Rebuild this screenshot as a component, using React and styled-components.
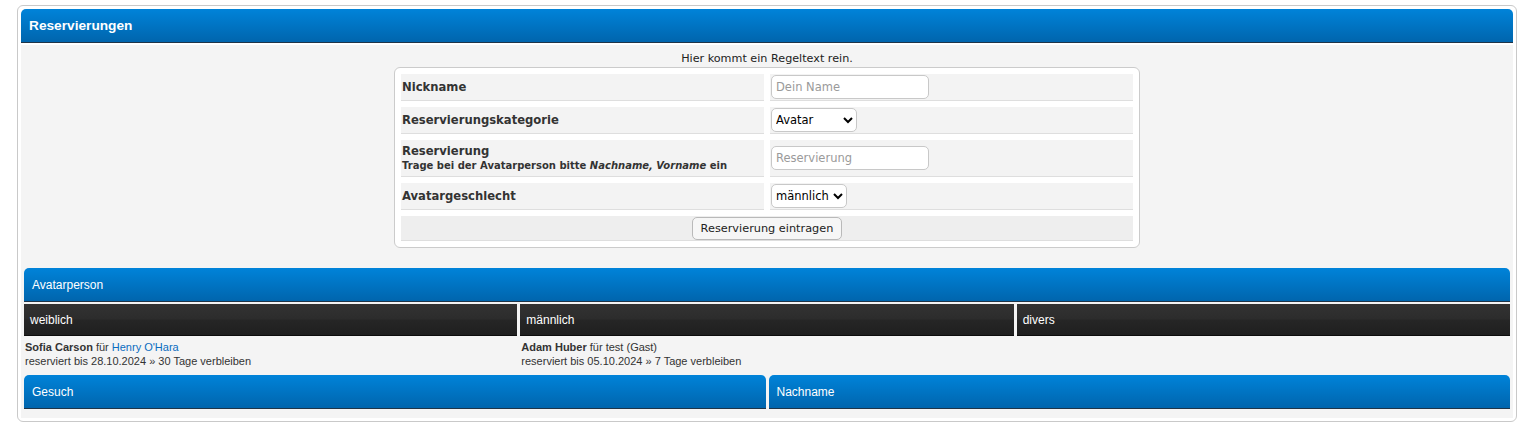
import React from 'react';
import styled, { createGlobalStyle } from 'styled-components';

const GlobalStyle = createGlobalStyle`
  body {
    margin: 0;
    background: #fff;
    font-family: "DejaVu Sans", Verdana, sans-serif;
  }
`

const Page = styled.div`
  padding: 5px 8px 10px 17px;
`

const Frame = styled.div`
  border: 1px solid #c9c9c9;
  border-radius: 6px;
  padding: 3px;
  background: #fff;
`

const BlueBar = styled.div`
  height: 33px;
  display: flex;
  align-items: center;
  padding-left: ${p => p.$pad || 8}px;
  border-bottom: 1px solid #1f3447;
  border-radius: 5px 5px 0 0;
  background: linear-gradient(#0083d9, #0065ad);
  color: #fff;
  font-family: Tahoma, "Liberation Sans", Arial, sans-serif;
  font-size: ${p => p.$size || 12}px;
  font-weight: ${p => (p.$bold ? 700 : 400)};
`

const Body = styled.div`
  margin-top: 2px;
  background: #f4f4f4;
  padding: 7px 0 9px;
`

const Intro = styled.div`
  text-align: center;
  font-size: 11.2px;
  line-height: 14px;
  color: #222;
`

const FormBox = styled.div`
  width: 746px;
  box-sizing: border-box;
  margin: 1px auto 0;
  border: 1px solid #cbcbcb;
  border-radius: 6px;
  background: #fff;
  padding: 6px;
  display: grid;
  grid-template-columns: 1fr 1fr;
  gap: 6px;
`

const Cell = styled.div`
  box-sizing: border-box;
  height: ${p => p.$h}px;
  background: ${p => (p.$wide ? '#eeeeee' : '#f3f3f3')};
  border-bottom: 1px solid #dedede;
  padding: 0 1px;
  display: flex;
  flex-direction: column;
  justify-content: center;
  align-items: ${p => (p.$wide ? 'center' : 'flex-start')};
  grid-column: ${p => (p.$wide ? '1 / 3' : 'auto')};
`

const Label = styled.div`
  font-size: 11.6px;
  font-weight: 700;
  color: #333;
  line-height: 15px;
`

const Hint = styled.div`
  font-size: 10px;
  font-weight: 700;
  color: #333;
  line-height: 14px;
  em { font-style: italic; }
`

const TextInput = styled.input`
  box-sizing: border-box;
  width: 158px;
  height: 24px;
  border: 1px solid #c8c8c8;
  border-radius: 5px;
  padding: 0 4px;
  background: #fff;
  font-family: "DejaVu Sans", Verdana, sans-serif;
  font-size: 11.5px;
  color: #222;
  &::placeholder { color: #9a9a9a; }
`

const Select = styled.select`
  box-sizing: border-box;
  width: ${p => p.$w}px;
  height: 24px;
  border: 1px solid #c8c8c8;
  border-radius: 5px;
  padding: 0;
  background: #fff;
  font-family: "DejaVu Sans", Verdana, sans-serif;
  font-size: 11.5px;
  color: #000;
`

const SubmitButton = styled.button`
  height: 23px;
  padding: 0 8px;
  border: 1px solid #b9b9b9;
  border-radius: 5px;
  background: #f6f6f6;
  font-family: "DejaVu Sans", Verdana, sans-serif;
  font-size: 11.3px;
  color: #222;
`

const Section = styled.div`
  margin: 20px 3px 0;
`

const Columns = styled.div`
  display: grid;
  grid-template-columns: repeat(${p => p.$n}, 1fr);
  column-gap: 3px;
  margin-top: ${p => p.$top || 0}px;
`

const DarkBar = styled.div`
  height: 31px;
  display: flex;
  align-items: center;
  padding-left: 6px;
  border-bottom: 1px solid #0d0d0d;
  background: linear-gradient(#333 0%, #2c2c2c 48%, #262626 52%, #1f1f1f 100%);
  color: #fff;
  font-family: Tahoma, "Liberation Sans", Arial, sans-serif;
  font-size: 12px;
`

const Entries = styled.div`
  padding: 4px 0 7px;
`

const Entry = styled.div`
  padding-left: 1px;
  font-family: Tahoma, "Liberation Sans", Arial, sans-serif;
  font-size: 11px;
  line-height: 14px;
  color: #333;
  b { font-weight: 700; }
  a { color: #0a6cc0; text-decoration: none; }
`

const reservations = [
  { name: 'Sofia Carson', user: 'Henry O\'Hara', link: true, until: '28.10.2024', days: 30 },
  { name: 'Adam Huber', user: 'test (Gast)', link: false, until: '05.10.2024', days: 7 },
]

function App() {
  return (
    <Page>
      <GlobalStyle />
      <Frame>
        <BlueBar $bold $size={13.7}>Reservierungen</BlueBar>
        <Body>
          <Intro>Hier kommt ein Regeltext rein.</Intro>
          <FormBox>
            <Cell $h={27}><Label>Nickname</Label></Cell>
            <Cell $h={27}><TextInput placeholder="Dein Name" /></Cell>

            <Cell $h={27}><Label>Reservierungskategorie</Label></Cell>
            <Cell $h={27}>
              <Select $w={86} defaultValue="Avatar">
                <option>Avatar</option>
                <option>Nachname</option>
                <option>Gesuch</option>
              </Select>
            </Cell>

            <Cell $h={37}>
              <Label>Reservierung</Label>
              <Hint>Trage bei der Avatarperson bitte <em>Nachname, Vorname</em> ein</Hint>
            </Cell>
            <Cell $h={37}><TextInput placeholder="Reservierung" /></Cell>

            <Cell $h={27}><Label>Avatargeschlecht</Label></Cell>
            <Cell $h={27}>
              <Select $w={76} defaultValue="männlich">
                <option>weiblich</option>
                <option>männlich</option>
                <option>divers</option>
              </Select>
            </Cell>

            <Cell $h={25} $wide>
              <SubmitButton type="submit">Reservierung eintragen</SubmitButton>
            </Cell>
          </FormBox>

          <Section>
            <BlueBar>Avatarperson</BlueBar>
            <Columns $n={3} $top={2}>
              <DarkBar>weiblich</DarkBar>
              <DarkBar>männlich</DarkBar>
              <DarkBar>divers</DarkBar>
            </Columns>
            <Columns $n={3}>
              {reservations.map(r => (
                <Entries key={r.name}>
                  <Entry>
                    <b>{r.name}</b> für {r.link ? <a href="#">{r.user}</a> : r.user}
                  </Entry>
                  <Entry>reserviert bis {r.until} » {r.days} Tage verbleiben</Entry>
                </Entries>
              ))}
              <Entries />
            </Columns>
            <Columns $n={2}>
              <BlueBar>Gesuch</BlueBar>
              <BlueBar>Nachname</BlueBar>
            </Columns>
          </Section>
        </Body>
      </Frame>
    </Page>
  );
}

export default App;
